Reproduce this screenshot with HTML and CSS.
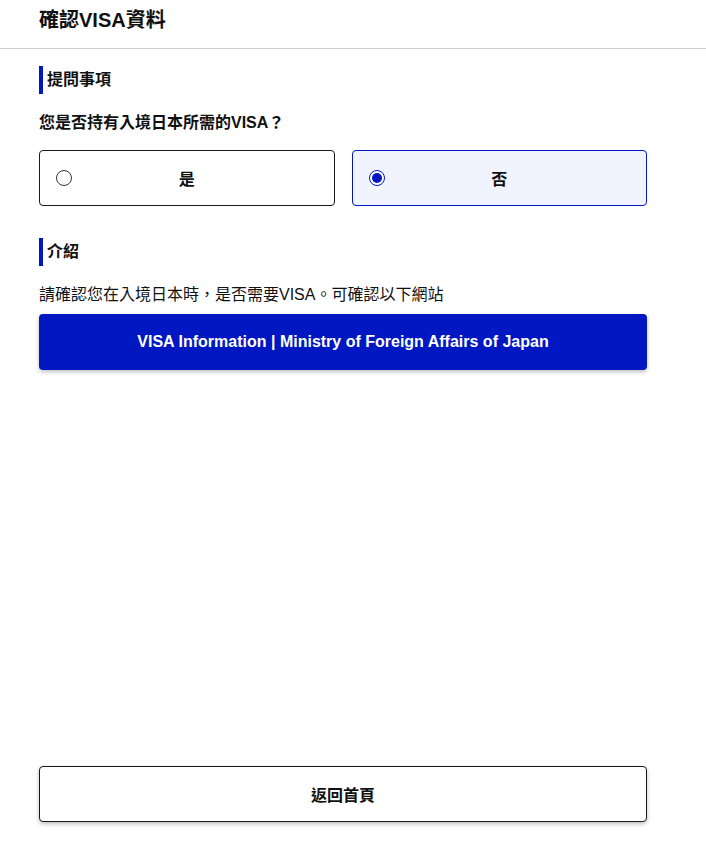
FILE: index.html
```html
<!DOCTYPE html>
<html lang="zh-Hant">
<head>
<meta charset="utf-8">
<title>確認VISA資料</title>
<link rel="stylesheet" href="styles.css">
</head>
<body>
<div class="page">
  <header class="header">
    <h1 class="title">確認VISA資料</h1>
  </header>
  <main class="content">
    <h2 class="section-title">提問事項</h2>
    <p class="question">您是否持有入境日本所需的VISA？</p>
    <div class="options">
      <label class="option">
        <span class="radio"></span>
        <span class="option-label">是</span>
      </label>
      <label class="option option-selected">
        <span class="radio radio-checked"></span>
        <span class="option-label">否</span>
      </label>
    </div>
    <h2 class="section-title section-gap">介紹</h2>
    <p class="intro">請確認您在入境日本時，是否需要VISA。可確認以下網站</p>
    <a class="btn-primary">VISA Information | Ministry of Foreign Affairs of Japan</a>
  </main>
  <footer class="footer">
    <a class="btn-secondary">返回首頁</a>
  </footer>
</div>
</body>
</html>
```

FILE: styles.css
```css
* { box-sizing: border-box; }
html, body { margin: 0; padding: 0; }
body {
  font-family: "Liberation Sans", "Noto Sans CJK TC", sans-serif;
  color: #1a1a1a;
  background: #fff;
}
.page {
  min-height: 100vh;
  display: flex;
  flex-direction: column;
}
.header {
  height: 49px;
  border-bottom: 1px solid #cccccc;
  padding: 0 39px;
  display: flex;
  align-items: center;
}
.title {
  margin: 0;
  font-size: 20px;
  font-weight: bold;
  line-height: 1;
  padding-bottom: 9px;
  color: #111;
}
.content {
  width: 608px;
  margin-left: 39px;
  padding-top: 17px;
}
.section-title {
  margin: 0;
  border-left: 4px solid #0017c1;
  padding-left: 4px;
  font-size: 16px;
  font-weight: bold;
  line-height: 28px;
  color: #111;
}
.section-gap { margin-top: 32px; }
.question {
  margin: 17px 0 0;
  font-size: 16px;
  font-weight: bold;
  line-height: 24px;
  color: #111;
}
.options {
  display: grid;
  grid-template-columns: 1fr 1fr;
  gap: 17px;
  margin-top: 15px;
}
.option {
  position: relative;
  height: 56px;
  border: 1px solid #1a1a1a;
  border-radius: 4px;
  display: flex;
  align-items: center;
  justify-content: center;
}
.option-selected {
  border-color: #0017c1;
  background: #f1f4ff;
}
.radio {
  position: absolute;
  left: 16px;
  top: 19px;
  width: 16px;
  height: 16px;
  border: 1px solid #333;
  border-radius: 50%;
  background: #fff;
}
.radio-checked {
  border-color: #0017c1;
}
.radio-checked::after {
  content: "";
  position: absolute;
  left: 2px;
  top: 2px;
  width: 10px;
  height: 10px;
  border-radius: 50%;
  background: #0017c1;
}
.option-label {
  font-size: 16px;
  font-weight: bold;
  color: #111;
}
.intro {
  margin: 18px 0 0;
  font-size: 16px;
  line-height: 22px;
  color: #111;
}
.btn-primary {
  display: flex;
  align-items: center;
  justify-content: center;
  height: 56px;
  margin-top: 8px;
  background: #0017c1;
  color: #fff;
  border-radius: 4px;
  font-size: 16px;
  font-weight: bold;
  box-shadow: 0 2px 4px rgba(0,0,0,0.25);
}
.footer {
  margin-top: auto;
  padding: 0 0 22px 39px;
}
.btn-secondary {
  display: flex;
  align-items: center;
  justify-content: center;
  width: 608px;
  height: 56px;
  border: 1px solid #1a1a1a;
  border-radius: 4px;
  background: #fff;
  font-size: 16px;
  font-weight: bold;
  color: #111;
  box-shadow: 0 2px 4px rgba(0,0,0,0.25);
}
```
